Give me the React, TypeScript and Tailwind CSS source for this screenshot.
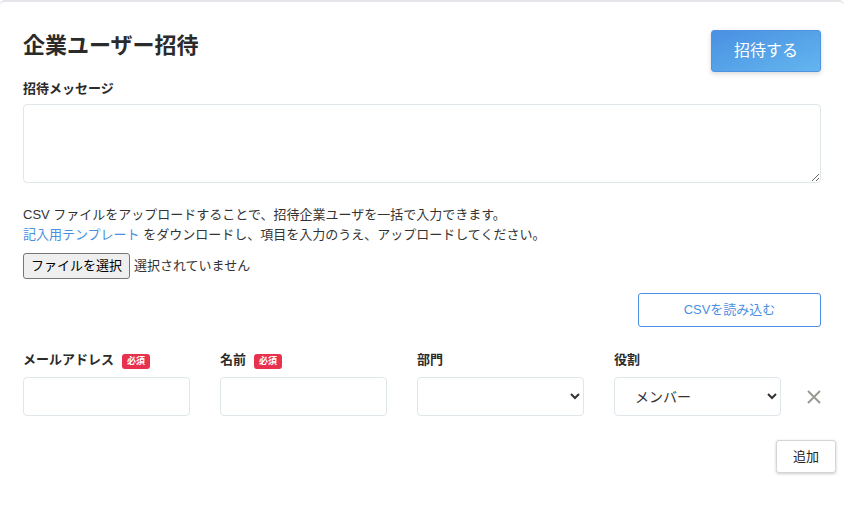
import React from "react";

const font = "font-['Liberation_Sans','Noto_Sans_CJK_JP',sans-serif]";

function Badge() {
  return (
    <span className="ml-2 mt-[4px] inline-flex h-[15px] w-[28px] items-center justify-center rounded-[3px] bg-[#e8304f] text-[9px] font-bold leading-none text-white">
      必須
    </span>
  );
}

function Label({ children, required }: { children: React.ReactNode; required?: boolean }) {
  return (
    <div className="flex h-[17px] items-center text-[13px] font-bold leading-[17px] text-[#2b2b2b]">
      {children}
      {required && <Badge />}
    </div>
  );
}

const field =
  "mt-[9px] h-[39px] w-[167px] rounded-[4px] border border-[#dfe7ea] bg-white text-[14px] text-[#333] outline-none";

export default function App() {
  return (
    <div className={`${font} h-[517px] w-[844px] overflow-hidden bg-white text-[#2b2b2b]`}>
      <div className="h-full rounded-t-[5px] border-t-2 border-[#e3e5e9] pl-[23px] pr-[23px]">
        <div className="flex items-start justify-between pt-[28px]">
          <h1 className="mt-[1px] text-[22px] font-bold leading-[30px] text-[#2b2b2b]">企業ユーザー招待</h1>
          <button className="h-[42px] w-[110px] rounded-[3px] border border-[#4d93e2] bg-gradient-to-br from-[#4a90e2] to-[#63b5ee] text-[16px] text-white shadow-[0_2px_5px_rgba(0,0,0,0.15)]">
            招待する
          </button>
        </div>

        <div className="mt-[8px] text-[13px] font-bold leading-[17px]">招待メッセージ</div>
        <textarea className="mt-[7px] block h-[79px] w-[798px] rounded-[4px] border border-[#dfe7ea] bg-white outline-none" />

        <p className="mt-[22px] text-[13px] leading-[20px] text-[#333]">
          CSV ファイルをアップロードすることで、招待企業ユーザを一括で入力できます。
          <br />
          <span className="text-[#4a90e2]">記入用テンプレート</span> をダウンロードし、項目を入力のうえ、アップロードしてください。
        </p>

        <div className="mt-[8px] flex items-center text-[13px] text-[#333]">
          <button className="h-[26px] w-[107px] rounded-[3px] border border-[#767676] bg-[#efefef] text-[13px] text-black">
            ファイルを選択
          </button>
          <span className="ml-[4px]">選択されていません</span>
        </div>

        <div className="mt-[14px] flex justify-end">
          <button className="h-[34px] w-[183px] rounded-[3px] border border-[#4a90e2] bg-white text-[13px] text-[#4a90e2]">
            CSVを読み込む
          </button>
        </div>

        <div className="mt-[24px] flex gap-[30px]">
          <div>
            <Label required>メールアドレス</Label>
            <input className={field} />
          </div>
          <div>
            <Label required>名前</Label>
            <input className={field} />
          </div>
          <div>
            <Label>部門</Label>
            <select className={`${field} block`} defaultValue="">
              <option value=""></option>
            </select>
          </div>
          <div>
            <Label>役割</Label>
            <select className={`${field} block pl-[16px]`} defaultValue="member">
              <option value="member">メンバー</option>
            </select>
          </div>
          <div className="flex items-end pb-[12px]">
            <svg width="14" height="14" viewBox="0 0 14 14" className="ml-[-4px]">
              <path d="M1 1 L13 13 M13 1 L1 13" stroke="#9a9a90" strokeWidth="2" fill="none" />
            </svg>
          </div>
        </div>

        <div className="mr-[-15px] mt-[24px] flex justify-end">
          <button className="h-[33px] w-[60px] rounded-[3px] border border-[#d5d5d5] bg-white text-[13px] text-[#222] shadow-[0_1px_3px_rgba(0,0,0,0.2)]">
            追加
          </button>
        </div>
      </div>
    </div>
  );
}
